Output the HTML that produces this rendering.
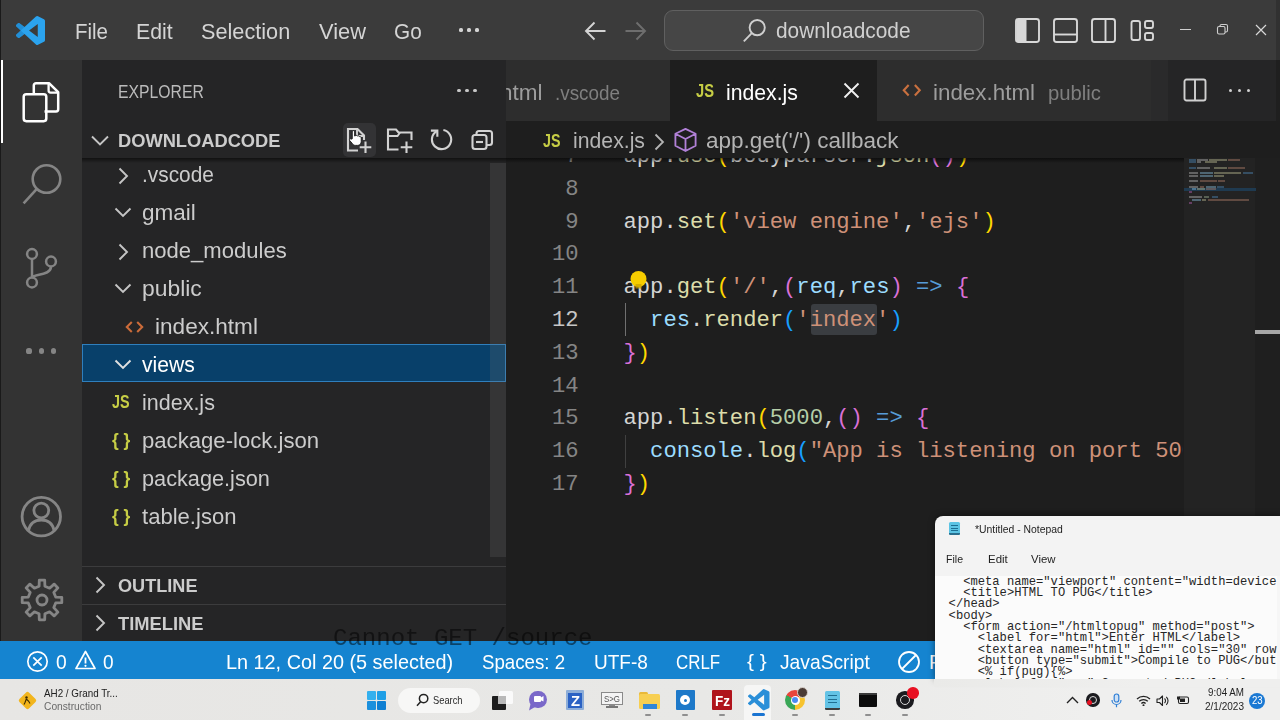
<!DOCTYPE html>
<html><head><meta charset="utf-8"><title>index.js - downloadcode - Visual Studio Code</title>
<style>
*{box-sizing:border-box;margin:0;padding:0}
html,body{width:1280px;height:720px;overflow:hidden;background:#1e1e1e}
body{font-family:"Liberation Sans",sans-serif;color:#ccc;position:relative}
.abs{position:absolute}
.t{position:absolute;white-space:pre;line-height:1;transform-origin:0 0}
.c{position:absolute;white-space:pre;line-height:1;font-family:"Liberation Mono",monospace}
</style></head><body>
<div class="abs" style="left:0px;top:0px;width:1280px;height:60px;background:#3b3b3b;"></div>
<div class="abs" style="left:0px;top:60px;width:82px;height:582px;background:#333333;"></div>
<div class="abs" style="left:82px;top:60px;width:424px;height:582px;background:#252526;"></div>
<div class="abs" style="left:506px;top:60px;width:774px;height:61px;background:#252526;"></div>
<div class="abs" style="left:506px;top:121px;width:774px;height:521px;background:#1e1e1e;"></div>
<svg class="abs" style="left:16px;top:16px;" width="29" height="29" viewBox="0 0 24 24" fill="none"><path fill="#2ba3ee" d="M23.15 2.587L18.21.21a1.494 1.494 0 0 0-1.705.29l-9.46 8.63-4.12-3.128a.999.999 0 0 0-1.276.057L.327 7.261A1 1 0 0 0 .326 8.74L3.899 12 .326 15.26a1 1 0 0 0 .001 1.479L1.65 17.94a.999.999 0 0 0 1.276.057l4.12-3.128 9.46 8.63a1.492 1.492 0 0 0 1.704.29l4.942-2.377A1.5 1.5 0 0 0 24 20.06V3.939a1.5 1.5 0 0 0-.85-1.352zm-5.146 14.861L10.826 12l7.178-5.448v10.896z"/><path fill="#1b7fc4" d="M.326 8.74L3.899 12 .326 15.26a1 1 0 0 0 .001 1.479L1.65 17.94a.999.999 0 0 0 1.276.057l4.12-3.128L3.9 12 7.045 9.13l-4.12-3.128a.999.999 0 0 0-1.276.057L.327 7.261A1 1 0 0 0 .326 8.74z" opacity=".55"/></svg>
<div class="t" style="left:75.00px;top:20.68px;font-size:22px;color:#d4d4d4;transform:scaleX(0.9311);">File</div>
<div class="t" style="left:136.30px;top:20.68px;font-size:22px;color:#d4d4d4;transform:scaleX(0.9682);">Edit</div>
<div class="t" style="left:201.30px;top:20.68px;font-size:22px;color:#d4d4d4;transform:scaleX(0.9855);">Selection</div>
<div class="t" style="left:319.00px;top:20.68px;font-size:22px;color:#d4d4d4;transform:scaleX(0.9927);">View</div>
<div class="t" style="left:394.30px;top:20.68px;font-size:22px;color:#d4d4d4;transform:scaleX(0.9438);">Go</div>
<div class="abs" style="left:459.4px;top:28.4px;width:3.2px;height:3.2px;background:#d4d4d4;border-radius:50%"></div>
<div class="abs" style="left:467.4px;top:28.4px;width:3.2px;height:3.2px;background:#d4d4d4;border-radius:50%"></div>
<div class="abs" style="left:475.4px;top:28.4px;width:3.2px;height:3.2px;background:#d4d4d4;border-radius:50%"></div>
<svg class="abs" style="left:583px;top:20px;" width="26" height="22" viewBox="0 0 26 22" fill="none"><path d="M22.5 11H3M11.5 2.5L3 11l8.5 8.5" stroke="#d4d4d4" stroke-width="1.9"/></svg>
<svg class="abs" style="left:622px;top:20px;" width="26" height="22" viewBox="0 0 26 22" fill="none"><path d="M3.5 11H23M14.5 2.5L23 11l-8.5 8.5" stroke="#6e6e6e" stroke-width="1.9"/></svg>
<div class="abs" style="left:664px;top:9.5px;width:320px;height:41px;background:#464646;border:1px solid #606060;border-radius:9px"></div>
<svg class="abs" style="left:742px;top:18px;" width="25" height="25" viewBox="0 0 25 25" fill="none"><circle cx="15.2" cy="9.6" r="7.6" stroke="#cfcfcf" stroke-width="1.9"/><path d="M9.8 15.2L1.8 23.4" stroke="#cfcfcf" stroke-width="1.9"/></svg>
<div class="t" style="left:775.50px;top:20.18px;font-size:22px;color:#d0d0d0;transform:scaleX(0.9479);">downloadcode</div>
<svg class="abs" style="left:1014px;top:17px;" width="27" height="27" viewBox="0 0 27 27" fill="none"><rect x="2" y="2" width="23" height="23" rx="2.5" stroke="#d8d8d8" stroke-width="1.9"/><path d="M2.5 3h10v21h-10z" fill="#d8d8d8"/></svg>
<svg class="abs" style="left:1052px;top:17px;" width="27" height="27" viewBox="0 0 27 27" fill="none"><rect x="2" y="2" width="23" height="23" rx="2.5" stroke="#d8d8d8" stroke-width="1.9"/><path d="M2 17.5h23" stroke="#d8d8d8" stroke-width="1.9"/></svg>
<svg class="abs" style="left:1090px;top:17px;" width="27" height="27" viewBox="0 0 27 27" fill="none"><rect x="2" y="2" width="23" height="23" rx="2.5" stroke="#d8d8d8" stroke-width="1.9"/><path d="M15.5 2v23" stroke="#d8d8d8" stroke-width="1.9"/></svg>
<svg class="abs" style="left:1129px;top:17px;" width="27" height="27" viewBox="0 0 27 27" fill="none"><rect x="2.5" y="4" width="8.5" height="19" rx="2" stroke="#d8d8d8" stroke-width="1.9"/><rect x="16" y="4" width="8" height="7" rx="2" stroke="#d8d8d8" stroke-width="1.9"/><rect x="16" y="16" width="8" height="7" rx="2" stroke="#d8d8d8" stroke-width="1.9"/></svg>
<div class="abs" style="left:1179.5px;top:29px;width:11px;height:1.2px;background:#cfcfcf;"></div>
<svg class="abs" style="left:1216px;top:23px;" width="13" height="13" viewBox="0 0 13 13" fill="none"><rect x="1.5" y="3.5" width="7.5" height="7.5" rx="1.5" stroke="#cfcfcf" stroke-width="1.1"/><path d="M4 3.5V3a1.5 1.5 0 0 1 1.5-1.5H10A1.5 1.5 0 0 1 11.5 3v4.5A1.5 1.5 0 0 1 10 9H9" stroke="#cfcfcf" stroke-width="1.1"/></svg>
<svg class="abs" style="left:1255px;top:24px;" width="12" height="12" viewBox="0 0 12 12" fill="none"><path d="M1 1l10 10M11 1L1 11" stroke="#d8d8d8" stroke-width="1.2"/></svg>
<div class="abs" style="left:1275.5px;top:0px;width:4.5px;height:121px;background:rgba(0,0,0,.16);"></div>
<div class="abs" style="left:0px;top:0px;width:1.3px;height:642px;background:#1a1a1a;"></div>
<div class="abs" style="left:1.3px;top:60px;width:2.2px;height:83px;background:#ffffff;"></div>
<svg class="abs" style="left:20px;top:78px;" width="42" height="48" viewBox="0 0 42 48" fill="none"><path d="M24.5 33.5H36a2.2 2.2 0 0 0 2.2-2.2V14.2L29 5.2H16a2.2 2.2 0 0 0-2.2 2.2V15" stroke="#fff" stroke-width="2.5" stroke-linejoin="round"/><path d="M28.6 5.6v7a2 2 0 0 0 2 2h7" stroke="#fff" stroke-width="2.3"/><rect x="3.7" y="16.2" width="22.6" height="27" rx="2.6" stroke="#fff" stroke-width="2.5"/></svg>
<svg class="abs" style="left:20px;top:160px;" width="46" height="48" viewBox="0 0 46 48" fill="none"><circle cx="26.5" cy="19" r="13.8" stroke="#858585" stroke-width="2.6"/><path d="M16.6 29.2L3.6 43.4" stroke="#858585" stroke-width="2.6"/></svg>
<svg class="abs" style="left:22px;top:244px;" width="40" height="48" viewBox="0 0 40 48" fill="none"><circle cx="10" cy="10" r="4.9" stroke="#858585" stroke-width="2.5"/><circle cx="10" cy="38.5" r="4.9" stroke="#858585" stroke-width="2.5"/><circle cx="29" cy="17.5" r="4.9" stroke="#858585" stroke-width="2.5"/><path d="M10 15v18.5M29 22.5c0 6-7 7.5-13 8.5-3 .5-5.5 1.3-6 3" stroke="#858585" stroke-width="2.5"/></svg>
<div class="abs" style="left:26.4px;top:348.4px;width:5.2px;height:5.2px;background:#858585;border-radius:50%"></div>
<div class="abs" style="left:38.699999999999996px;top:348.4px;width:5.2px;height:5.2px;background:#858585;border-radius:50%"></div>
<div class="abs" style="left:50.9px;top:348.4px;width:5.2px;height:5.2px;background:#858585;border-radius:50%"></div>
<svg class="abs" style="left:19px;top:494px;" width="46" height="46" viewBox="0 0 46 46" fill="none"><circle cx="22.3" cy="22.6" r="19.2" stroke="#858585" stroke-width="2.8"/><circle cx="22.3" cy="16.5" r="7.4" stroke="#858585" stroke-width="2.8"/><path d="M9.5 36.5c1.5-7 6.5-10.5 12.8-10.5s11.3 3.5 12.8 10.5" stroke="#858585" stroke-width="2.8"/></svg>
<svg class="abs" style="left:18.7px;top:576.5px;" width="46" height="46" viewBox="0 0 46 46" fill="none"><path d="M20.1 9.3L20.3 3.2L25.7 3.2L25.9 9.3L30.6 11.2L35.1 7.1L38.9 10.9L34.8 15.4L36.7 20.1L42.8 20.3L42.8 25.7L36.7 25.9L34.8 30.6L38.9 35.1L35.1 38.9L30.6 34.8L25.9 36.7L25.7 42.8L20.3 42.8L20.1 36.7L15.4 34.8L10.9 38.9L7.1 35.1L11.2 30.6L9.3 25.9L3.2 25.7L3.2 20.3L9.3 20.1L11.2 15.4L7.1 10.9L10.9 7.1L15.4 11.2Z" stroke="#858585" stroke-width="2.8" stroke-linejoin="round"/><circle cx="23" cy="23" r="5" stroke="#858585" stroke-width="2.8"/></svg>
<div class="t" style="left:118.00px;top:83.06px;font-size:18.6px;color:#bbbbbb;transform:scaleX(0.8470);">EXPLORER</div>
<div class="abs" style="left:457.4px;top:88.6px;width:3.2px;height:3.2px;background:#c8c8c8;border-radius:50%"></div>
<div class="abs" style="left:465.4px;top:88.6px;width:3.2px;height:3.2px;background:#c8c8c8;border-radius:50%"></div>
<div class="abs" style="left:473.4px;top:88.6px;width:3.2px;height:3.2px;background:#c8c8c8;border-radius:50%"></div>
<div class="abs" style="left:82px;top:158px;width:424px;height:5px;background:linear-gradient(#111,rgba(37,37,38,0))"></div>
<svg class="abs" style="left:89px;top:133px;" width="22" height="16" viewBox="0 0 22 16" fill="none"><path d="M3 3.5l8 8 8-8" stroke="#c5c5c5" stroke-width="1.9"/></svg>
<div class="t" style="left:118.00px;top:131.76px;font-size:18.6px;color:#cccccc;font-weight:700;transform:scaleX(0.9830);">DOWNLOADCODE</div>
<div class="abs" style="left:343.4px;top:122.8px;width:32.2px;height:34.6px;background:#333335;border-radius:5px"></div>
<svg class="abs" style="left:345px;top:126px;" width="30" height="30" viewBox="0 0 30 30" fill="none"><path d="M13 24.5H3V3h9.5l6.5 6.500V14" stroke="#d2d2d2" stroke-width="2.1"/><path d="M12 3.500v6.500h6.5" stroke="#d2d2d2" stroke-width="1.9"/><path d="M20.5 15.500v11.500M14.7 21.300h11.6" stroke="#d2d2d2" stroke-width="2.1"/></svg>
<svg class="abs" style="left:385px;top:126px;" width="30" height="30" viewBox="0 0 30 30" fill="none"><path d="M13.5 23.500H3V3.500h8l2.5 3h13V14" stroke="#d2d2d2" stroke-width="2.1"/><path d="M3 10h9.500l2.5-3.5" stroke="#d2d2d2" stroke-width="1.9"/><path d="M21.5 15.500V27M15.7 21.300h11.6" stroke="#d2d2d2" stroke-width="2.1"/></svg>
<svg class="abs" style="left:427.5px;top:126px;" width="25" height="25" viewBox="0 0 26 26" fill="none"><path d="M9.2 5.300A10 10 0 1 0 16 4.2" stroke="#d2d2d2" stroke-width="2.2"/><path d="M3 4.800h6.700v6.5" stroke="#d2d2d2" stroke-width="2.2"/></svg>
<svg class="abs" style="left:470px;top:127.5px;" width="25" height="24" viewBox="0 0 25 24" fill="none"><rect x="2.5" y="7" width="14" height="14" rx="2.5" stroke="#d2d2d2" stroke-width="2.1"/><path d="M6.5 7V5.500A2.5 2.5 0 0 1 9 3H19.500A2.5 2.5 0 0 1 22 5.500V14.500A2.5 2.5 0 0 1 19.5 17H16.5" stroke="#d2d2d2" stroke-width="2.1"/><path d="M6 14h7" stroke="#d2d2d2" stroke-width="2.1"/></svg>
<svg class="abs" style="left:347.5px;top:128.5px;" width="14" height="18" viewBox="0 0 18 22" fill="none"><path d="M5.5 12V3a1.5 1.5 0 0 1 3 0v5.500l.8-.2a1.5 1.5 0 0 1 2.7.3 1.5 1.5 0 0 1 2.6.6c1.4-.3 2.4.5 2.4 1.800v4.500c0 3-1.8 5-4.5 5H9.500c-1.8 0-3-1-4-2.500L2 14c-.8-1.3.8-2.6 2-1.500z" fill="#fff" stroke="#111" stroke-width="1.1"/></svg>
<div class="abs" style="left:82px;top:343.7px;width:424px;height:38.6px;background:#08406a;border:1px solid #2f7fbd"></div>
<div class="t" style="left:141.70px;top:163.98px;font-size:22px;color:#cccccc;transform:scaleX(0.9471);">.vscode</div>
<svg class="abs" style="left:117px;top:165.6px;" width="12" height="20" viewBox="0 0 12 20" fill="none"><path d="M2.5 2.500l7.5 7.5-7.5 7.5" stroke="#c5c5c5" stroke-width="1.9"/></svg>
<div class="t" style="left:141.70px;top:201.98px;font-size:22px;color:#cccccc;transform:scaleX(1.0232);">gmail</div>
<svg class="abs" style="left:112.5px;top:206.1px;" width="20" height="12" viewBox="0 0 20 12" fill="none"><path d="M2.5 2.500l7.5 7.5 7.5-7.5" stroke="#c5c5c5" stroke-width="1.9"/></svg>
<div class="t" style="left:141.70px;top:239.98px;font-size:22px;color:#cccccc;transform:scaleX(1.0032);">node_modules</div>
<svg class="abs" style="left:117px;top:241.60000000000002px;" width="12" height="20" viewBox="0 0 12 20" fill="none"><path d="M2.5 2.500l7.5 7.5-7.5 7.5" stroke="#c5c5c5" stroke-width="1.9"/></svg>
<div class="t" style="left:141.70px;top:277.98px;font-size:22px;color:#cccccc;transform:scaleX(1.0403);">public</div>
<svg class="abs" style="left:112.5px;top:282.1px;" width="20" height="12" viewBox="0 0 20 12" fill="none"><path d="M2.5 2.500l7.5 7.5 7.5-7.5" stroke="#c5c5c5" stroke-width="1.9"/></svg>
<div class="t" style="left:155.40px;top:315.98px;font-size:22px;color:#cccccc;transform:scaleX(1.0262);">index.html</div>
<svg class="abs" style="left:124.5px;top:320.1px;" width="19" height="14" viewBox="0 0 21 15" fill="none"><path d="M7.5 2L2 7.5 7.5 13M13.5 2L19 7.5 13.5 13" stroke="#cc6c3a" stroke-width="2.3"/></svg>
<div class="t" style="left:141.70px;top:353.98px;font-size:22px;color:#ffffff;transform:scaleX(0.9596);">views</div>
<svg class="abs" style="left:112.5px;top:358.1px;" width="20" height="12" viewBox="0 0 20 12" fill="none"><path d="M2.5 2.500l7.5 7.5 7.5-7.5" stroke="#e0e0e0" stroke-width="1.9"/></svg>
<div class="t" style="left:141.70px;top:391.98px;font-size:22px;color:#cccccc;transform:scaleX(0.9772);">index.js</div>
<div class="t" style="left:111.70px;top:393.36px;font-size:18px;color:#c6cd45;font-weight:700;transform:scaleX(0.7995);">JS</div>
<div class="t" style="left:141.70px;top:429.98px;font-size:22px;color:#cccccc;transform:scaleX(1.0057);">package-lock.json</div>
<div class="t" style="left:111.70px;top:430.86px;font-size:18px;color:#c6cd45;font-weight:700;transform:scaleX(0.9628);">{ }</div>
<div class="t" style="left:141.70px;top:467.98px;font-size:22px;color:#cccccc;transform:scaleX(0.9865);">package.json</div>
<div class="t" style="left:111.70px;top:468.86px;font-size:18px;color:#c6cd45;font-weight:700;transform:scaleX(0.9628);">{ }</div>
<div class="t" style="left:141.70px;top:505.98px;font-size:22px;color:#cccccc;transform:scaleX(1.0034);">table.json</div>
<div class="t" style="left:111.70px;top:506.86px;font-size:18px;color:#c6cd45;font-weight:700;transform:scaleX(0.9628);">{ }</div>
<div class="abs" style="left:490px;top:163px;width:16px;height:394px;background:rgba(121,121,121,.2);"></div>
<div class="abs" style="left:82px;top:565.5px;width:424px;height:1px;background:#3c3c3d;"></div>
<div class="abs" style="left:82px;top:603.5px;width:424px;height:1px;background:#3c3c3d;"></div>
<svg class="abs" style="left:94px;top:575px;" width="12" height="20" viewBox="0 0 12 20" fill="none"><path d="M2.5 2.500l7.5 7.5-7.5 7.5" stroke="#c5c5c5" stroke-width="1.9"/></svg>
<svg class="abs" style="left:94px;top:613px;" width="12" height="20" viewBox="0 0 12 20" fill="none"><path d="M2.5 2.500l7.5 7.5-7.5 7.5" stroke="#c5c5c5" stroke-width="1.9"/></svg>
<div class="t" style="left:118.00px;top:577.26px;font-size:18.6px;color:#cccccc;font-weight:700;transform:scaleX(0.9738);">OUTLINE</div>
<div class="t" style="left:118.00px;top:615.46px;font-size:18.6px;color:#cccccc;font-weight:700;transform:scaleX(0.9850);">TIMELINE</div>
<div class="abs" style="left:506px;top:60px;width:163.5px;height:61px;background:#2d2d2d;overflow:hidden">
<div class="t" style="left:-66.00px;top:21.78px;font-size:22px;color:#9d9d9d;transform:scaleX(1.0222);">index.html</div>
<div class="t" style="left:48.50px;top:23.89px;font-size:19.5px;color:#7f7f7f;transform:scaleX(0.9673);">.vscode</div>
</div>
<div class="abs" style="left:669.5px;top:60px;width:207px;height:61px;background:#1e1e1e;"></div>
<div class="abs" style="left:876.5px;top:60px;width:274.5px;height:61px;background:#2d2d2d;"></div>
<div class="abs" style="left:1151px;top:60px;width:17px;height:61px;background:#2a2a2b;"></div>
<div class="t" style="left:695.60px;top:81.76px;font-size:18px;color:#c6cd45;font-weight:700;transform:scaleX(0.8177);">JS</div>
<div class="t" style="left:726.40px;top:81.78px;font-size:22px;color:#ffffff;transform:scaleX(0.9638);">index.js</div>
<svg class="abs" style="left:843px;top:82px;" width="17" height="17" viewBox="0 0 17 17" fill="none"><path d="M1.5 1.500l14 14M15.5 1.500l-14 14" stroke="#f0f0f0" stroke-width="1.9"/></svg>
<svg class="abs" style="left:902px;top:83px;" width="19.5" height="14.5" viewBox="0 0 22 16" fill="none"><path d="M7.5 2L2 8l5.5 6M14.5 2L20 8l-5.5 6" stroke="#c9703f" stroke-width="2.4"/></svg>
<div class="t" style="left:933.00px;top:81.78px;font-size:22px;color:#9d9d9d;transform:scaleX(1.0172);">index.html</div>
<div class="t" style="left:1047.50px;top:83.89px;font-size:19.5px;color:#7f7f7f;transform:scaleX(1.0402);">public</div>
<svg class="abs" style="left:1183px;top:78px;" width="24" height="24" viewBox="0 0 24 24" fill="none"><rect x="1.5" y="1.5" width="21" height="21" rx="2" stroke="#d0d0d0" stroke-width="1.9"/><path d="M12 1.500v21" stroke="#d0d0d0" stroke-width="1.9"/></svg>
<div class="abs" style="left:1228.8px;top:88.5px;width:3.4px;height:3.4px;background:#d0d0d0;border-radius:50%"></div>
<div class="abs" style="left:1237.8px;top:88.5px;width:3.4px;height:3.4px;background:#d0d0d0;border-radius:50%"></div>
<div class="abs" style="left:1246.8px;top:88.5px;width:3.4px;height:3.4px;background:#d0d0d0;border-radius:50%"></div>
<div class="t" style="left:542.50px;top:131.56px;font-size:18px;color:#c6cd45;font-weight:700;transform:scaleX(0.7949);">JS</div>
<div class="t" style="left:572.50px;top:130.18px;font-size:22px;color:#b4b4b4;transform:scaleX(0.9651);">index.js</div>
<svg class="abs" style="left:653px;top:132px;" width="12" height="20" viewBox="0 0 12 20" fill="none"><path d="M2.5 2.500l7.5 7.5-7.5 7.5" stroke="#b4b4b4" stroke-width="1.8"/></svg>
<svg class="abs" style="left:672.8px;top:126.3px;" width="25" height="28" viewBox="0 0 26 28" fill="none"><path d="M13 2.500l10.5 5v12.500L13 25.5 2.5 20V7.500zM2.5 7.500L13 13l10.5-5.500M13 13v12.5" stroke="#b180d7" stroke-width="1.9" stroke-linejoin="round"/></svg>
<div class="t" style="left:706.00px;top:130.18px;font-size:22px;color:#b4b4b4;transform:scaleX(1.0228);">app.get(&#x27;/&#x27;) callback</div>
<div class="abs" style="left:506px;top:158px;width:676.5px;height:484px;overflow:hidden">
<div class="abs" style="left:304.5px;top:145.5px;width:66px;height:31.5px;background:#3a3d41;border-radius:3px"></div>
<div class="abs" style="left:119px;top:145px;width:1.2px;height:33px;background:#707070;"></div>
<div class="abs" style="left:119px;top:276.5px;width:1.2px;height:33px;background:#404040;"></div>
<div class="c" style="left:12.7px;top:-11.92px;width:60px;text-align:right;font-size:22.2px;color:#858585">7</div>
<div class="c" style="left:117.50px;top:-11.92px;font-size:22.2px;letter-spacing:-0.022px"><span style="color:#d4d4d4">app</span><span style="color:#d4d4d4">.</span><span style="color:#dcdcaa">use</span><span style="color:#ffd700">(</span><span style="color:#d4d4d4">bodyparser</span><span style="color:#d4d4d4">.</span><span style="color:#dcdcaa">json</span><span style="color:#da70d6">(</span><span style="color:#da70d6">)</span><span style="color:#ffd700">)</span></div>
<div class="c" style="left:12.7px;top:20.88px;width:60px;text-align:right;font-size:22.2px;color:#858585">8</div>
<div class="c" style="left:12.7px;top:53.68px;width:60px;text-align:right;font-size:22.2px;color:#858585">9</div>
<div class="c" style="left:117.50px;top:53.68px;font-size:22.2px;letter-spacing:-0.022px"><span style="color:#d4d4d4">app</span><span style="color:#d4d4d4">.</span><span style="color:#dcdcaa">set</span><span style="color:#ffd700">(</span><span style="color:#ce9178">&#x27;view engine&#x27;</span><span style="color:#d4d4d4">,</span><span style="color:#ce9178">&#x27;ejs&#x27;</span><span style="color:#ffd700">)</span></div>
<div class="c" style="left:12.7px;top:86.48px;width:60px;text-align:right;font-size:22.2px;color:#858585">10</div>
<div class="c" style="left:12.7px;top:119.28px;width:60px;text-align:right;font-size:22.2px;color:#858585">11</div>
<div class="c" style="left:117.50px;top:119.28px;font-size:22.2px;letter-spacing:-0.022px"><span style="color:#d4d4d4">app</span><span style="color:#d4d4d4">.</span><span style="color:#dcdcaa">get</span><span style="color:#ffd700">(</span><span style="color:#ce9178">&#x27;/&#x27;</span><span style="color:#d4d4d4">,</span><span style="color:#da70d6">(</span><span style="color:#9cdcfe">req</span><span style="color:#d4d4d4">,</span><span style="color:#9cdcfe">res</span><span style="color:#da70d6">)</span><span style="color:#d4d4d4"> </span><span style="color:#569cd6">=&gt;</span><span style="color:#d4d4d4"> </span><span style="color:#da70d6">{</span></div>
<div class="c" style="left:12.7px;top:152.08px;width:60px;text-align:right;font-size:22.2px;color:#c6c6c6">12</div>
<div class="c" style="left:117.50px;top:152.08px;font-size:22.2px;letter-spacing:-0.022px"><span style="color:#d4d4d4">  </span><span style="color:#9cdcfe">res</span><span style="color:#d4d4d4">.</span><span style="color:#dcdcaa">render</span><span style="color:#179fff">(</span><span style="color:#ce9178">&#x27;index&#x27;</span><span style="color:#179fff">)</span></div>
<div class="c" style="left:12.7px;top:184.88px;width:60px;text-align:right;font-size:22.2px;color:#858585">13</div>
<div class="c" style="left:117.50px;top:184.88px;font-size:22.2px;letter-spacing:-0.022px"><span style="color:#da70d6">}</span><span style="color:#ffd700">)</span></div>
<div class="c" style="left:12.7px;top:217.68px;width:60px;text-align:right;font-size:22.2px;color:#858585">14</div>
<div class="c" style="left:12.7px;top:250.48px;width:60px;text-align:right;font-size:22.2px;color:#858585">15</div>
<div class="c" style="left:117.50px;top:250.48px;font-size:22.2px;letter-spacing:-0.022px"><span style="color:#d4d4d4">app</span><span style="color:#d4d4d4">.</span><span style="color:#dcdcaa">listen</span><span style="color:#ffd700">(</span><span style="color:#b5cea8">5000</span><span style="color:#d4d4d4">,</span><span style="color:#da70d6">(</span><span style="color:#da70d6">)</span><span style="color:#d4d4d4"> </span><span style="color:#569cd6">=&gt;</span><span style="color:#d4d4d4"> </span><span style="color:#da70d6">{</span></div>
<div class="c" style="left:12.7px;top:283.28px;width:60px;text-align:right;font-size:22.2px;color:#858585">16</div>
<div class="c" style="left:117.50px;top:283.28px;font-size:22.2px;letter-spacing:-0.022px"><span style="color:#d4d4d4">  </span><span style="color:#9cdcfe">console</span><span style="color:#d4d4d4">.</span><span style="color:#dcdcaa">log</span><span style="color:#179fff">(</span><span style="color:#ce9178">&quot;App is listening on port 5000&quot;</span><span style="color:#179fff">)</span></div>
<div class="c" style="left:12.7px;top:316.08px;width:60px;text-align:right;font-size:22.2px;color:#858585">17</div>
<div class="c" style="left:117.50px;top:316.08px;font-size:22.2px;letter-spacing:-0.022px"><span style="color:#da70d6">}</span><span style="color:#ffd700">)</span></div>
<svg class="abs" style="left:123px;top:111px;" width="19" height="24" viewBox="0 0 19 24" fill="none"><circle cx="9.5" cy="10" r="8" fill="#f7cd00"/><path d="M6.5 15h6v4.500h-6z" fill="#c9a100" opacity=".75"/></svg>
</div>
<div class="abs" style="left:506px;top:158px;width:774px;height:5px;background:linear-gradient(rgba(0,0,0,.55),rgba(0,0,0,0))"></div>
<div class="abs" style="left:1184px;top:158px;width:71px;height:484px;background:#232323;"></div>
<div class="abs" style="left:1255px;top:158px;width:25px;height:484px;background:#1f1f1f;"></div>
<div class="abs" style="left:1184px;top:188px;width:72px;height:3px;background:#1f3a50;"></div>
<div class="abs" style="left:1189.0px;top:159px;width:6.7px;height:2px;background:#569cd6;opacity:.36"></div>
<div class="abs" style="left:1197.04px;top:159px;width:10.72px;height:2px;background:#d4d4d4;opacity:.36"></div>
<div class="abs" style="left:1209.1px;top:159px;width:17.42px;height:2px;background:#dcdcaa;opacity:.36"></div>
<div class="abs" style="left:1227.86px;top:159px;width:12.06px;height:2px;background:#ce9178;opacity:.36"></div>
<div class="abs" style="left:1189.0px;top:161px;width:6.7px;height:2px;background:#569cd6;opacity:.36"></div>
<div class="abs" style="left:1197.04px;top:161px;width:4.02px;height:2px;background:#d4d4d4;opacity:.36"></div>
<div class="abs" style="left:1205.08px;top:161px;width:12.06px;height:2px;background:#dcdcaa;opacity:.36"></div>
<div class="abs" style="left:1189.0px;top:167px;width:6.7px;height:2px;background:#569cd6;opacity:.36"></div>
<div class="abs" style="left:1197.04px;top:167px;width:13.4px;height:2px;background:#d4d4d4;opacity:.36"></div>
<div class="abs" style="left:1214.46px;top:167px;width:12.06px;height:2px;background:#dcdcaa;opacity:.36"></div>
<div class="abs" style="left:1227.86px;top:167px;width:17.42px;height:2px;background:#ce9178;opacity:.36"></div>
<div class="abs" style="left:1189.0px;top:172px;width:9.38px;height:2px;background:#d4d4d4;opacity:.36"></div>
<div class="abs" style="left:1199.72px;top:172px;width:13.4px;height:2px;background:#9cdcfe;opacity:.36"></div>
<div class="abs" style="left:1214.46px;top:172px;width:26.8px;height:2px;background:#dcdcaa;opacity:.36"></div>
<div class="abs" style="left:1242.6px;top:172px;width:10.72px;height:2px;background:#569cd6;opacity:.36"></div>
<div class="abs" style="left:1189.0px;top:175px;width:9.38px;height:2px;background:#d4d4d4;opacity:.36"></div>
<div class="abs" style="left:1199.72px;top:175px;width:13.4px;height:2px;background:#9cdcfe;opacity:.36"></div>
<div class="abs" style="left:1214.46px;top:175px;width:9.38px;height:2px;background:#dcdcaa;opacity:.36"></div>
<div class="abs" style="left:1189.0px;top:180px;width:9.38px;height:2px;background:#d4d4d4;opacity:.36"></div>
<div class="abs" style="left:1199.72px;top:180px;width:17.42px;height:2px;background:#ce9178;opacity:.36"></div>
<div class="abs" style="left:1218.48px;top:180px;width:6.7px;height:2px;background:#ce9178;opacity:.36"></div>
<div class="abs" style="left:1189.0px;top:186px;width:9.38px;height:2px;background:#d4d4d4;opacity:.36"></div>
<div class="abs" style="left:1199.72px;top:186px;width:4.02px;height:2px;background:#ce9178;opacity:.36"></div>
<div class="abs" style="left:1206.42px;top:186px;width:9.38px;height:2px;background:#9cdcfe;opacity:.36"></div>
<div class="abs" style="left:1217.14px;top:186px;width:6.7px;height:2px;background:#569cd6;opacity:.36"></div>
<div class="abs" style="left:1191.68px;top:188px;width:4.02px;height:2px;background:#9cdcfe;opacity:.36"></div>
<div class="abs" style="left:1197.04px;top:188px;width:8.04px;height:2px;background:#dcdcaa;opacity:.36"></div>
<div class="abs" style="left:1206.42px;top:188px;width:9.38px;height:2px;background:#ce9178;opacity:.36"></div>
<div class="abs" style="left:1189.0px;top:191px;width:2.68px;height:2px;background:#da70d6;opacity:.36"></div>
<div class="abs" style="left:1189.0px;top:196px;width:13.4px;height:2px;background:#d4d4d4;opacity:.36"></div>
<div class="abs" style="left:1203.74px;top:196px;width:5.36px;height:2px;background:#b5cea8;opacity:.36"></div>
<div class="abs" style="left:1211.78px;top:196px;width:6.7px;height:2px;background:#569cd6;opacity:.36"></div>
<div class="abs" style="left:1191.68px;top:199px;width:9.38px;height:2px;background:#9cdcfe;opacity:.36"></div>
<div class="abs" style="left:1202.4px;top:199px;width:4.02px;height:2px;background:#dcdcaa;opacity:.36"></div>
<div class="abs" style="left:1207.76px;top:199px;width:41.54px;height:2px;background:#ce9178;opacity:.36"></div>
<div class="abs" style="left:1189.0px;top:202px;width:2.68px;height:2px;background:#da70d6;opacity:.36"></div>
<div class="abs" style="left:1255px;top:330px;width:24.5px;height:4px;background:#a6a6a6;"></div>
<div class="abs" style="left:0px;top:640.8px;width:1280px;height:38.5px;background:#1584d0;"></div>
<svg class="abs" style="left:26px;top:649.5px;" width="23" height="23" viewBox="0 0 23 23" fill="none"><circle cx="11.5" cy="11.5" r="9.7" stroke="#ffffff" stroke-width="1.7"/><path d="M7.3 7.300l8.4 8.400M15.7 7.300l-8.4 8.4" stroke="#ffffff" stroke-width="1.7"/></svg>
<div class="t" style="left:56.30px;top:651.50px;font-size:20.2px;color:#ffffff;transform:scaleX(0.9527);">0</div>
<svg class="abs" style="left:73.5px;top:648.5px;" width="23" height="22" viewBox="0 0 23 22" fill="none"><path d="M11.5 2.500L21 19.500H2z" stroke="#ffffff" stroke-width="1.7" stroke-linejoin="round"/><path d="M11.5 8.500v6" stroke="#ffffff" stroke-width="1.8"/><circle cx="11.5" cy="16.8" r="1.1" fill="#ffffff"/></svg>
<div class="t" style="left:103.20px;top:651.50px;font-size:20.2px;color:#ffffff;transform:scaleX(0.9438);">0</div>
<div class="t" style="left:225.80px;top:651.50px;font-size:20.2px;color:#ffffff;transform:scaleX(0.9822);">Ln 12, Col 20 (5 selected)</div>
<div class="t" style="left:481.50px;top:651.50px;font-size:20.2px;color:#ffffff;transform:scaleX(0.9262);">Spaces: 2</div>
<div class="t" style="left:593.60px;top:651.50px;font-size:20.2px;color:#ffffff;transform:scaleX(0.9419);">UTF-8</div>
<div class="t" style="left:675.60px;top:651.50px;font-size:20.2px;color:#ffffff;transform:scaleX(0.8380);">CRLF</div>
<div class="t" style="left:747.00px;top:651.84px;font-size:18.5px;color:#ffffff;transform:scaleX(1.1199);">{ }</div>
<div class="t" style="left:779.50px;top:651.50px;font-size:20.2px;color:#ffffff;transform:scaleX(0.9534);">JavaScript</div>
<svg class="abs" style="left:897px;top:649.5px;" width="24" height="24" viewBox="0 0 24 24" fill="none"><circle cx="12" cy="12" r="10" stroke="#ffffff" stroke-width="1.8"/><path d="M19 5L5 19" stroke="#ffffff" stroke-width="1.8"/></svg>
<div class="t" style="left:929.00px;top:651.50px;font-size:20.2px;color:#ffffff;">Prettier</div>
<div class="t" style="left:333.00px;top:627.22px;font-size:24.5px;color:rgba(0,0,0,.5);font-family:'Liberation Mono',monospace;transform:scaleX(0.9805);filter:blur(.5px);">Cannot GET /source</div>
<div class="abs" style="left:0px;top:679.3px;width:1280px;height:40.7px;background:linear-gradient(90deg,#e7e6e4 0%,#e8e8e6 55%,#efefee 85%);"></div>
<svg class="abs" style="left:17px;top:689.5px;" width="21" height="21" viewBox="0 0 21 21" fill="none"><rect x="3.8" y="3.8" width="13.4" height="13.4" rx="2" transform="rotate(45 10.5 10.5)" fill="#f2b51d"/><circle cx="9.5" cy="7.5" r="1.2" fill="#3a2a00"/><path d="M9.3 9l-1.3 3.500M9.3 9l2.2 2 1.5 2.500M8 12.500l-1 2" stroke="#3a2a00" stroke-width="1.1"/></svg>
<div class="t" style="left:43.80px;top:688.19px;font-size:11px;color:#202020;transform:scaleX(0.8930);">AH2 / Grand Tr...</div>
<div class="t" style="left:43.80px;top:701.19px;font-size:11px;color:#6a6a6a;transform:scaleX(0.9295);">Construction</div>
<div class="abs" style="left:366.8px;top:690.5px;width:9.2px;height:9.2px;background:#33b0ee;border-radius:1px"></div>
<div class="abs" style="left:376.90000000000003px;top:690.5px;width:9.2px;height:9.2px;background:#1f9fe6;border-radius:1px"></div>
<div class="abs" style="left:366.8px;top:700.6px;width:9.2px;height:9.2px;background:#1b90dd;border-radius:1px"></div>
<div class="abs" style="left:376.90000000000003px;top:700.6px;width:9.2px;height:9.2px;background:#0f7fd2;border-radius:1px"></div>
<div class="abs" style="left:398px;top:687.5px;width:82px;height:25px;background:#f7f7f6;border-radius:12.5px"></div>
<svg class="abs" style="left:416px;top:693px;" width="13" height="14" viewBox="0 0 13 14" fill="none"><circle cx="7.6" cy="5.6" r="4.2" stroke="#222" stroke-width="1.5"/><path d="M4.6 8.800L1 12.8" stroke="#222" stroke-width="1.5"/></svg>
<div class="t" style="left:433.00px;top:694.69px;font-size:11px;color:#2a2a2a;transform:scaleX(0.8465);">Search</div>
<div class="abs" style="left:499px;top:691px;width:13.5px;height:12.5px;background:#fafafa;border-radius:1.500px"></div>
<div class="abs" style="left:492px;top:696px;width:14px;height:13.5px;background:#1d1d1d;border-radius:1px"></div>
<div class="abs" style="left:497.5px;top:696px;width:8.5px;height:8px;background:#b9b9b9;"></div>
<div class="abs" style="left:528.8px;top:690.5px;width:18.7px;height:17px;background:#7a68c9;border-radius:8.500px"></div>
<svg class="abs" style="left:528px;top:703px;" width="8" height="8" viewBox="0 0 8 8" fill="none"><path d="M1 7.500L2.5 1 7 4z" fill="#7a68c9"/></svg>
<div class="abs" style="left:533.5px;top:696px;width:7px;height:5.5px;background:#fff;border-radius:1px"></div>
<svg class="abs" style="left:540px;top:696px;" width="4" height="6" viewBox="0 0 4 6" fill="none"><path d="M0 2l3.5-2v5.500L0 4z" fill="#fff"/></svg>
<div class="abs" style="left:566px;top:690px;width:18px;height:20px;background:#8eaed8;border-radius:1px"></div>
<div class="abs" style="left:568px;top:692.5px;width:14px;height:15px;background:#2b62c4;"></div>
<div class="t" style="left:570.50px;top:694.15px;font-size:14px;color:#ffffff;font-weight:700;transform:scaleX(1.0521);">Z</div>
<div class="abs" style="left:601px;top:692px;width:21.5px;height:12.5px;background:#f4f4f4;border:1.200px solid #8a8a8a"></div>
<div class="t" style="left:603.50px;top:694.80px;font-size:8.5px;color:#555;transform:scaleX(0.9277);">S&gt;G</div>
<div class="abs" style="left:609px;top:704.5px;width:5.5px;height:2px;background:#888;"></div>
<div class="abs" style="left:605.5px;top:706.3px;width:12.5px;height:1.5px;background:#777;"></div>
<div class="abs" style="left:639px;top:691.5px;width:9px;height:4px;background:#e9b93a;border-radius:1.500px 1.500px 0 0"></div>
<div class="abs" style="left:639px;top:693.5px;width:20.5px;height:15.5px;background:#f7cf52;border-radius:1.500px"></div>
<div class="abs" style="left:643px;top:703.5px;width:14px;height:5.5px;background:#2f86d8;"></div>
<div class="abs" style="left:645px;top:713.5px;width:6px;height:2px;background:#8f8f8f;border-radius:1px"></div>
<div class="abs" style="left:675.5px;top:690px;width:19.5px;height:20px;background:#1d79c9;border-radius:1px"></div>
<div class="abs" style="left:680.3px;top:695px;width:10px;height:10px;background:#ffffff;border-radius:50%"></div>
<div class="abs" style="left:683.8px;top:698.5px;width:3.6px;height:3.6px;background:#1d79c9;border-radius:50%"></div>
<div class="abs" style="left:682px;top:713.5px;width:6px;height:2px;background:#8f8f8f;border-radius:1px"></div>
<div class="abs" style="left:712px;top:690px;width:19.8px;height:20px;background:#b0141c;border-radius:1px"></div>
<div class="t" style="left:714.50px;top:693.30px;font-size:15px;color:#ffffff;font-weight:700;transform:scaleX(0.9001);">Fz</div>
<div class="abs" style="left:719px;top:713.5px;width:6px;height:2px;background:#8f8f8f;border-radius:1px"></div>
<div class="abs" style="left:743.8px;top:684.5px;width:27.2px;height:35.5px;background:#f6f6f5;border-radius:4px 4px 0 0"></div>
<svg class="abs" style="left:748px;top:689px;" width="21.5" height="21.5" viewBox="0 0 24 24" fill="none"><path fill="#2a8fd8" d="M23.15 2.587L18.21.21a1.494 1.494 0 0 0-1.705.29l-9.46 8.63-4.12-3.128a.999.999 0 0 0-1.276.057L.327 7.261A1 1 0 0 0 .326 8.740L3.899 12 .326 15.260a1 1 0 0 0 .001 1.479L1.650 17.940a.999.999 0 0 0 1.276.057l4.120-3.128 9.460 8.630a1.492 1.492 0 0 0 1.704.290l4.942-2.377A1.5 1.5 0 0 0 24 20.060V3.939a1.5 1.5 0 0 0-.850-1.352zm-5.146 14.861L10.826 12l7.178-5.448v10.896z"/></svg>
<div class="abs" style="left:752px;top:713px;width:13px;height:3px;background:#1a74d1;border-radius:1.500px"></div>
<div class="abs" style="left:785px;top:690px;width:20px;height:20px;border-radius:50%;background:conic-gradient(from -60deg,#e8453c 0 120deg,#f7c32e 120deg 240deg,#3aa757 240deg 360deg)"></div>
<div class="abs" style="left:790.5px;top:695.5px;width:9px;height:9px;background:#ffffff;border-radius:50%"></div>
<div class="abs" style="left:791.8px;top:696.8px;width:6.4px;height:6.4px;background:#4a8af4;border-radius:50%"></div>
<div class="abs" style="left:797px;top:686.5px;width:11px;height:11px;background:#4b3b34;border-radius:50%;border:1px solid #d9d2cc"></div>
<div class="abs" style="left:792px;top:713.5px;width:6px;height:2px;background:#8f8f8f;border-radius:1px"></div>
<div class="abs" style="left:825px;top:690.5px;width:14.5px;height:19.5px;background:#63c3e6;border-radius:1.500px"></div>
<div class="abs" style="left:825px;top:707.5px;width:14.5px;height:2.5px;background:#3d3d3d;border-radius:0 0 1.500px 1.500px"></div>
<div class="abs" style="left:827.5px;top:695px;width:9.5px;height:1.2px;background:#1f6f92;"></div>
<div class="abs" style="left:827.5px;top:698.5px;width:9.5px;height:1.2px;background:#1f6f92;"></div>
<div class="abs" style="left:827.5px;top:702px;width:9.5px;height:1.2px;background:#1f6f92;"></div>
<div class="abs" style="left:829px;top:713.5px;width:6px;height:2px;background:#8f8f8f;border-radius:1px"></div>
<div class="abs" style="left:858.8px;top:692.5px;width:18.2px;height:14.5px;background:#0c0c0c;border-radius:1px"></div>
<div class="abs" style="left:858.8px;top:692.5px;width:18.2px;height:2.5px;background:#3b3b3b;"></div>
<div class="abs" style="left:865px;top:713.5px;width:6px;height:2px;background:#8f8f8f;border-radius:1px"></div>
<div class="abs" style="left:896px;top:691px;width:17.5px;height:17.5px;background:#1b1b1f;border-radius:50%"></div>
<div class="abs" style="left:899.5px;top:694.5px;width:10.5px;height:10.5px;background:#1b1b1f;border-radius:50%;border:1.500px solid #d8d8d8"></div>
<div class="abs" style="left:907px;top:687px;width:11.5px;height:11.5px;background:#e81123;border-radius:50%"></div>
<div class="abs" style="left:901.5px;top:713.5px;width:6px;height:2px;background:#8f8f8f;border-radius:1px"></div>
<svg class="abs" style="left:1066px;top:696px;" width="13" height="8" viewBox="0 0 13 8" fill="none"><path d="M1 7l5.5-5.500L12 7" stroke="#222" stroke-width="1.4"/></svg>
<div class="abs" style="left:1086px;top:693px;width:13.5px;height:13.5px;background:#1b1b1f;border-radius:50%"></div>
<div class="abs" style="left:1088.5px;top:695.5px;width:8.5px;height:8.5px;background:#1b1b1f;border-radius:50%;border:1.200px solid #ddd"></div>
<div class="abs" style="left:1086.5px;top:699.5px;width:5.5px;height:5.5px;background:#e81123;border-radius:50%"></div>
<svg class="abs" style="left:1111px;top:692.5px;" width="11" height="15" viewBox="0 0 11 15" fill="none"><rect x="3.2" y="1" width="4.6" height="8" rx="2.3" stroke="#2f7fd6" stroke-width="1.2" fill="#cfe1f5"/><path d="M1 7a4.5 4.5 0 0 0 9 0M5.5 11.500v2.8" stroke="#2f7fd6" stroke-width="1.2"/></svg>
<svg class="abs" style="left:1135.5px;top:694.5px;" width="15" height="11.5" viewBox="0 0 15 11.5" fill="none"><path d="M1 4a9.3 9.3 0 0 1 13 0M3.2 6.300a6.2 6.2 0 0 1 8.6 0M5.4 8.500a3.1 3.1 0 0 1 4.2 0" stroke="#222" stroke-width="1.3"/><circle cx="7.5" cy="10.3" r="1" fill="#222"/></svg>
<svg class="abs" style="left:1156px;top:694.5px;" width="13" height="11.5" viewBox="0 0 13 11.5" fill="none"><path d="M1 4h2.500L6.5 1v9.500L3.5 7.500H1z" stroke="#222" stroke-width="1.1" stroke-linejoin="round"/><path d="M8.5 3.500a3 3 0 0 1 0 4.500M10.3 1.800a5.5 5.5 0 0 1 0 8" stroke="#222" stroke-width="1.1"/></svg>
<svg class="abs" style="left:1176px;top:695px;" width="14" height="10" viewBox="0 0 14 10" fill="none"><rect x="2.5" y="2" width="10" height="6.5" rx="1.5" stroke="#222" stroke-width="1.1"/><rect x="4" y="3.5" width="5" height="3.5" fill="#222"/><path d="M1 1.500h3v3H1z" fill="#222"/></svg>
<div class="t" style="left:1208.00px;top:686.69px;font-size:11px;color:#1f1f1f;transform:scaleX(0.8920);">9:04 AM</div>
<div class="t" style="left:1205.00px;top:701.19px;font-size:11px;color:#1f1f1f;transform:scaleX(0.9107);">2/1/2023</div>
<div class="abs" style="left:1249px;top:692.5px;width:16px;height:16px;background:#1b79d3;border-radius:50%"></div>
<div class="t" style="left:1251.80px;top:695.41px;font-size:10.5px;color:#ffffff;transform:scaleX(0.9164);">23</div>
<div class="abs" style="left:934.5px;top:515.5px;width:346px;height:164.5px;background:#f3f3f3;border-radius:8px 0 0 0;overflow:hidden;box-shadow:0 0 6px rgba(0,0,0,.5)">
<div class="abs" style="left:0px;top:60.5px;width:346px;height:110px;background:#fbfbfb;"></div>
<div class="abs" style="left:14.5px;top:6.5px;width:11px;height:13px;background:#5cc4e4;border-radius:1.500px"></div>
<div class="abs" style="left:14.5px;top:17.5px;width:11px;height:2px;background:#2a6f8e;border-radius:0 0 1.500px 1.500px"></div>
<div class="abs" style="left:16.5px;top:9.5px;width:7px;height:1px;background:#1c6f93;"></div>
<div class="abs" style="left:16.5px;top:12.0px;width:7px;height:1px;background:#1c6f93;"></div>
<div class="abs" style="left:16.5px;top:14.5px;width:7px;height:1px;background:#1c6f93;"></div>
<div class="t" style="left:40.30px;top:8.19px;font-size:11px;color:#1e1e1e;transform:scaleX(0.9447);">*Untitled - Notepad</div>
<div class="t" style="left:11.50px;top:38.77px;font-size:11.5px;color:#1e1e1e;transform:scaleX(0.9176);">File</div>
<div class="t" style="left:53.80px;top:38.77px;font-size:11.5px;color:#1e1e1e;transform:scaleX(0.9942);">Edit</div>
<div class="t" style="left:96.50px;top:38.77px;font-size:11.5px;color:#1e1e1e;transform:scaleX(0.9900);">View</div>
<div class="c" style="left:14.1px;top:60.09px;font-size:12.15px;color:#262626">  &lt;meta name=&quot;viewport&quot; content=&quot;width=device-width, initial-scale=1.0&quot;&gt;</div>
<div class="c" style="left:14.1px;top:71.44px;font-size:12.15px;color:#262626">  &lt;title&gt;HTML TO PUG&lt;/title&gt;</div>
<div class="c" style="left:14.1px;top:82.79px;font-size:12.15px;color:#262626">&lt;/head&gt;</div>
<div class="c" style="left:14.1px;top:94.14px;font-size:12.15px;color:#262626">&lt;body&gt;</div>
<div class="c" style="left:14.1px;top:105.49px;font-size:12.15px;color:#262626">  &lt;form action=&quot;/htmltopug&quot; method=&quot;post&quot;&gt;</div>
<div class="c" style="left:14.1px;top:116.84px;font-size:12.15px;color:#262626">    &lt;label for=&quot;html&quot;&gt;Enter HTML&lt;/label&gt;</div>
<div class="c" style="left:14.1px;top:128.19px;font-size:12.15px;color:#262626">    &lt;textarea name=&quot;html&quot; id=&quot;&quot; cols=&quot;30&quot; rows=&quot;10&quot;&gt;&lt;/textarea&gt;</div>
<div class="c" style="left:14.1px;top:139.54px;font-size:12.15px;color:#262626">    &lt;button type=&quot;submit&quot;&gt;Compile to PUG&lt;/button&gt;</div>
<div class="c" style="left:14.1px;top:150.89px;font-size:12.15px;color:#262626">    &lt;% if(pug){%&gt;</div>
<div class="c" style="left:14.1px;top:162.24px;font-size:12.15px;color:#262626">    &lt;label for=&quot;pug&quot;&gt;Converted PUG&lt;/label&gt;</div>
<div class="abs" style="left:342.0px;top:60.5px;width:5px;height:110px;background:#f6f6f6;"></div>
</div>
<div class="abs" style="left:934px;top:679.3px;width:346px;height:8px;background:linear-gradient(90deg,#eaeae8,#efefee 60%);"></div>
</body></html>
